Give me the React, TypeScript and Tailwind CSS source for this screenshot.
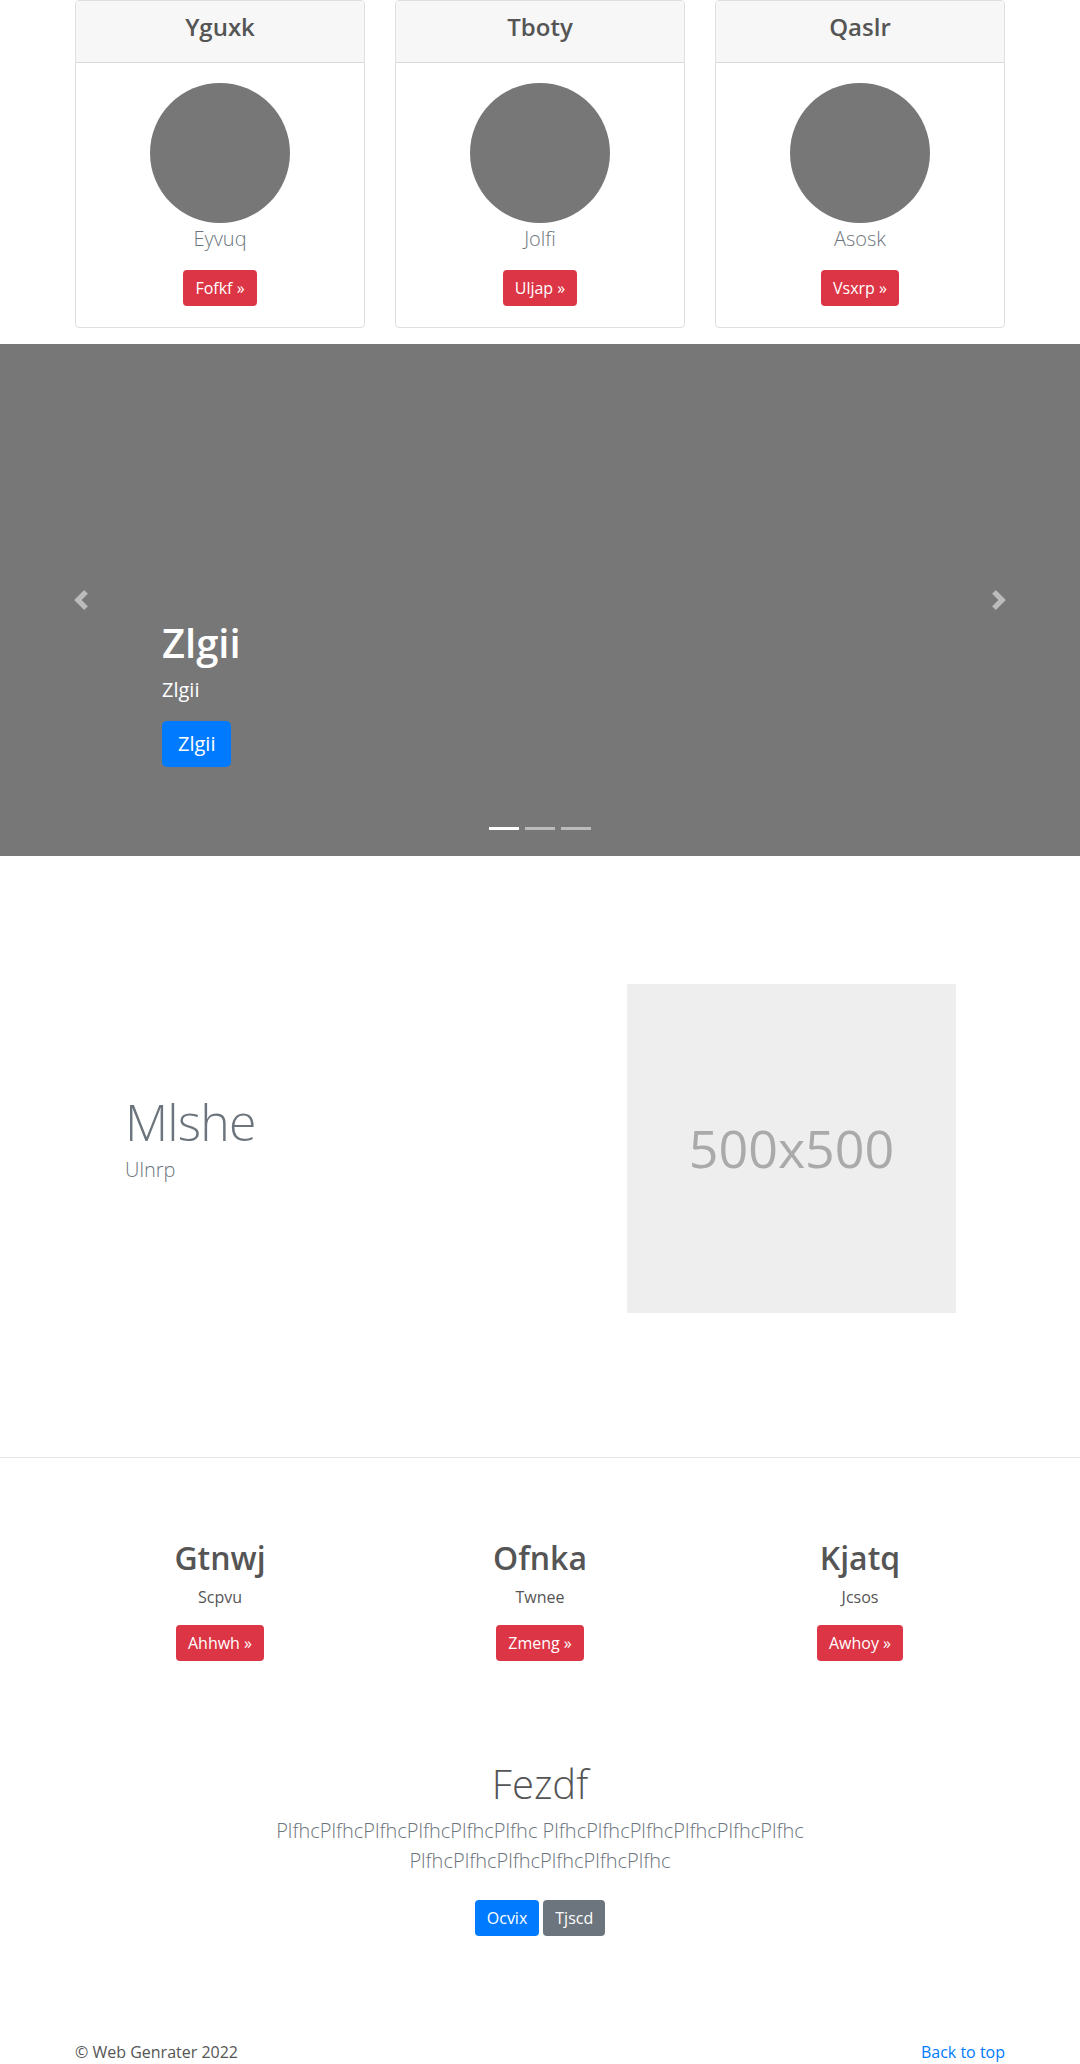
import React from "react";

const CARDS = [
  { title: "Yguxk", name: "Eyvuq", cta: "Fofkf" },
  { title: "Tboty", name: "Jolfi", cta: "Uljap" },
  { title: "Qaslr", name: "Asosk", cta: "Vsxrp" },
];

const FEATURES = [
  { title: "Gtnwj", text: "Scpvu", cta: "Ahhwh" },
  { title: "Ofnka", text: "Twnee", cta: "Zmeng" },
  { title: "Kjatq", text: "Jcsos", cta: "Awhoy" },
];

const WORD = "Plfhc".repeat(6);

function Chevron({ dir }: { dir: "prev" | "next" }) {
  return (
    <svg width="20" height="20" viewBox="0 0 8 8" fill="#fff" className="opacity-50">
      {dir === "prev" ? (
        <path d="M5.25 0l-4 4 4 4 1.5-1.5-2.5-2.5 2.5-2.5-1.5-1.5z" />
      ) : (
        <path d="M2.75 0l-1.5 1.5 2.5 2.5-2.5 2.5 1.5 1.5 4-4-4-4z" />
      )}
    </svg>
  );
}

export default function App() {
  return (
    <div className="bg-white font-['Segoe_UI','Open_Sans','Noto_Sans',sans-serif] text-[16px] leading-normal text-[#212529]">
      {/* Card deck */}
      <div className="w-[960px] mx-auto px-[15px] mb-4">
        <div className="flex gap-[30px]">
          {CARDS.map((c) => (
            <div key={c.title} className="flex-1 border border-[rgba(0,0,0,0.125)] rounded-[4px] text-center overflow-hidden">
              <div className="bg-[#f7f7f7] border-b border-[rgba(0,0,0,0.125)] px-5 pt-3 pb-3">
                <h4 className="text-[24px] font-semibold leading-[1.2] mb-2 text-[#555]">{c.title}</h4>
              </div>
              <div className="px-5 pt-5 pb-[21px]">
                <div className="w-[140px] h-[140px] rounded-full bg-[#777] mx-auto" />
                <p className="text-[20px] font-light leading-[1.5] text-[#6c757d] mt-px mb-4">{c.name}</p>
                <a className="inline-block bg-[#dc3545] text-white px-3 py-1.5 text-[16px] leading-6 rounded-[4px]">
                  {c.cta} »
                </a>
              </div>
            </div>
          ))}
        </div>
      </div>

      {/* Carousel */}
      <div className="relative h-[512px] bg-[#777]">
        <div className="absolute left-0 top-0 bottom-0 w-[15%] flex items-center justify-center">
          <Chevron dir="prev" />
        </div>
        <div className="absolute right-0 top-0 bottom-0 w-[15%] flex items-center justify-center">
          <Chevron dir="next" />
        </div>
        <div className="absolute left-[15%] right-[15%] bottom-[53px] py-5 text-white text-left">
          <h1 className="text-[40px] font-semibold leading-[1.2] mb-2">Zlgii</h1>
          <p className="text-[20px] leading-[1.5] mb-4">Zlgii</p>
          <p className="mb-4">
            <a className="inline-block bg-[#007bff] text-white px-4 py-2 text-[20px] leading-[1.5] rounded-[5px]">Zlgii</a>
          </p>
        </div>
        <div className="absolute left-0 right-0 bottom-0 mb-4 flex justify-center">
          <span className="w-[30px] h-[3px] mx-[3px] my-[10px] bg-white" />
          <span className="w-[30px] h-[3px] mx-[3px] my-[10px] bg-[rgba(255,255,255,0.5)]" />
          <span className="w-[30px] h-[3px] mx-[3px] my-[10px] bg-[rgba(255,255,255,0.5)]" />
        </div>
      </div>

      {/* Featurette */}
      <div className="pt-[128px] pb-[144px] border-b border-[#e5e5e5]">
        <div className="w-[960px] mx-auto flex items-center">
          <div className="flex-1 pl-[65px] pt-[2px]">
            <h2 className="text-[50px] font-light leading-none tracking-[-0.05rem] text-[#6c757d] mb-2">Mlshe</h2>
            <p className="text-[20px] font-light leading-[1.5] text-[#6c757d] mb-4">Ulnrp</p>
          </div>
          <div className="w-[329px] h-[329px] mr-[64px] bg-[#eee] flex items-center justify-center">
            <span className="text-[52px] text-[#aaa]">500x500</span>
          </div>
        </div>
      </div>

      {/* Marketing columns */}
      <div className="pt-[81px] w-[960px] mx-auto grid grid-cols-3 text-center">
        {FEATURES.map((f) => (
          <div key={f.title} className="px-[15px]">
            <h2 className="text-[32px] font-semibold leading-[1.2] mb-2 text-[#555]">{f.title}</h2>
            <p className="text-[16px] leading-[1.5] text-[#555] mb-4">{f.text}</p>
            <p className="mb-4">
              <a className="inline-block bg-[#dc3545] text-white px-3 py-1.5 text-[16px] leading-6 rounded-[4px]">
                {f.cta} »
              </a>
            </p>
          </div>
        ))}
      </div>

      {/* Jumbotron */}
      <section className="pt-[83px] pb-12 text-center">
        <h1 className="text-[40px] font-light leading-[1.2] mb-2 text-[#555]">Fezdf</h1>
        <p className="w-[610px] mx-auto text-[20px] font-light leading-[1.5] text-[#6c757d] mb-4">
          {WORD} {WORD} {WORD}
        </p>
        <p className="flex justify-center gap-1">
          <a className="my-2 inline-block bg-[#007bff] text-white px-3 py-1.5 text-[16px] leading-6 rounded-[4px]">Ocvix</a>
          <a className="my-2 inline-block bg-[#6c757d] text-white px-3 py-1.5 text-[16px] leading-6 rounded-[4px]">Tjscd</a>
        </p>
      </section>

      {/* Footer */}
      <footer className="w-[960px] mx-auto px-[15px] py-12 flex justify-between text-[#555]">
        <p>© Web Genrater 2022</p>
        <p>
          <a className="text-[#007bff]">Back to top</a>
        </p>
      </footer>
    </div>
  );
}
